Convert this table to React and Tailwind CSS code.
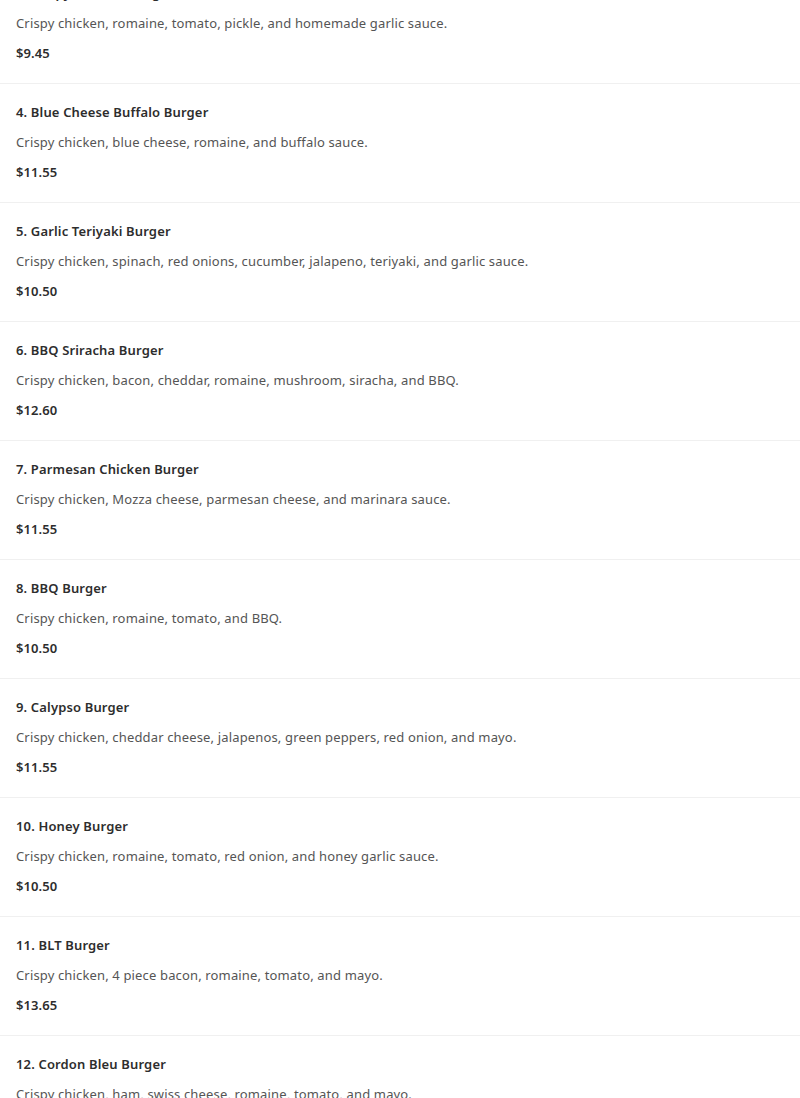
const items = [
  { name: "3. Crispy Chicken Burger", desc: "Crispy chicken, romaine, tomato, pickle, and homemade garlic sauce.", price: "$9.45" },
  { name: "4. Blue Cheese Buffalo Burger", desc: "Crispy chicken, blue cheese, romaine, and buffalo sauce.", price: "$11.55" },
  { name: "5. Garlic Teriyaki Burger", desc: "Crispy chicken, spinach, red onions, cucumber, jalapeno, teriyaki, and garlic sauce.", price: "$10.50" },
  { name: "6. BBQ Sriracha Burger", desc: "Crispy chicken, bacon, cheddar, romaine, mushroom, siracha, and BBQ.", price: "$12.60" },
  { name: "7. Parmesan Chicken Burger", desc: "Crispy chicken, Mozza cheese, parmesan cheese, and marinara sauce.", price: "$11.55" },
  { name: "8. BBQ Burger", desc: "Crispy chicken, romaine, tomato, and BBQ.", price: "$10.50" },
  { name: "9. Calypso Burger", desc: "Crispy chicken, cheddar cheese, jalapenos, green peppers, red onion, and mayo.", price: "$11.55" },
  { name: "10. Honey Burger", desc: "Crispy chicken, romaine, tomato, red onion, and honey garlic sauce.", price: "$10.50" },
  { name: "11. BLT Burger", desc: "Crispy chicken, 4 piece bacon, romaine, tomato, and mayo.", price: "$13.65" },
  { name: "12. Cordon Bleu Burger", desc: "Crispy chicken, ham, swiss cheese, romaine, tomato, and mayo.", price: "$11.55" },
];

export default function App() {
  return (
    <div className="h-[1098px] overflow-hidden bg-white font-['Noto_Sans',sans-serif]">
      <div className="mt-[-36px] flex flex-col">
        {items.map((it) => (
          <div key={it.name} className="border-t border-[#f0f0f0] px-4 pt-[19px] pb-[21px]">
            <div className="text-[13px] leading-[18px] font-semibold tracking-[0.15px] text-[#2d2d2d]">{it.name}</div>
            <div className="mt-3 text-[13px] leading-[18px] tracking-[0.15px] text-[#555555]">{it.desc}</div>
            <div className="mt-3 text-[13px] leading-[18px] font-semibold tracking-[0.1px] text-[#2d2d2d]">{it.price}</div>
          </div>
        ))}
      </div>
    </div>
  );
}
